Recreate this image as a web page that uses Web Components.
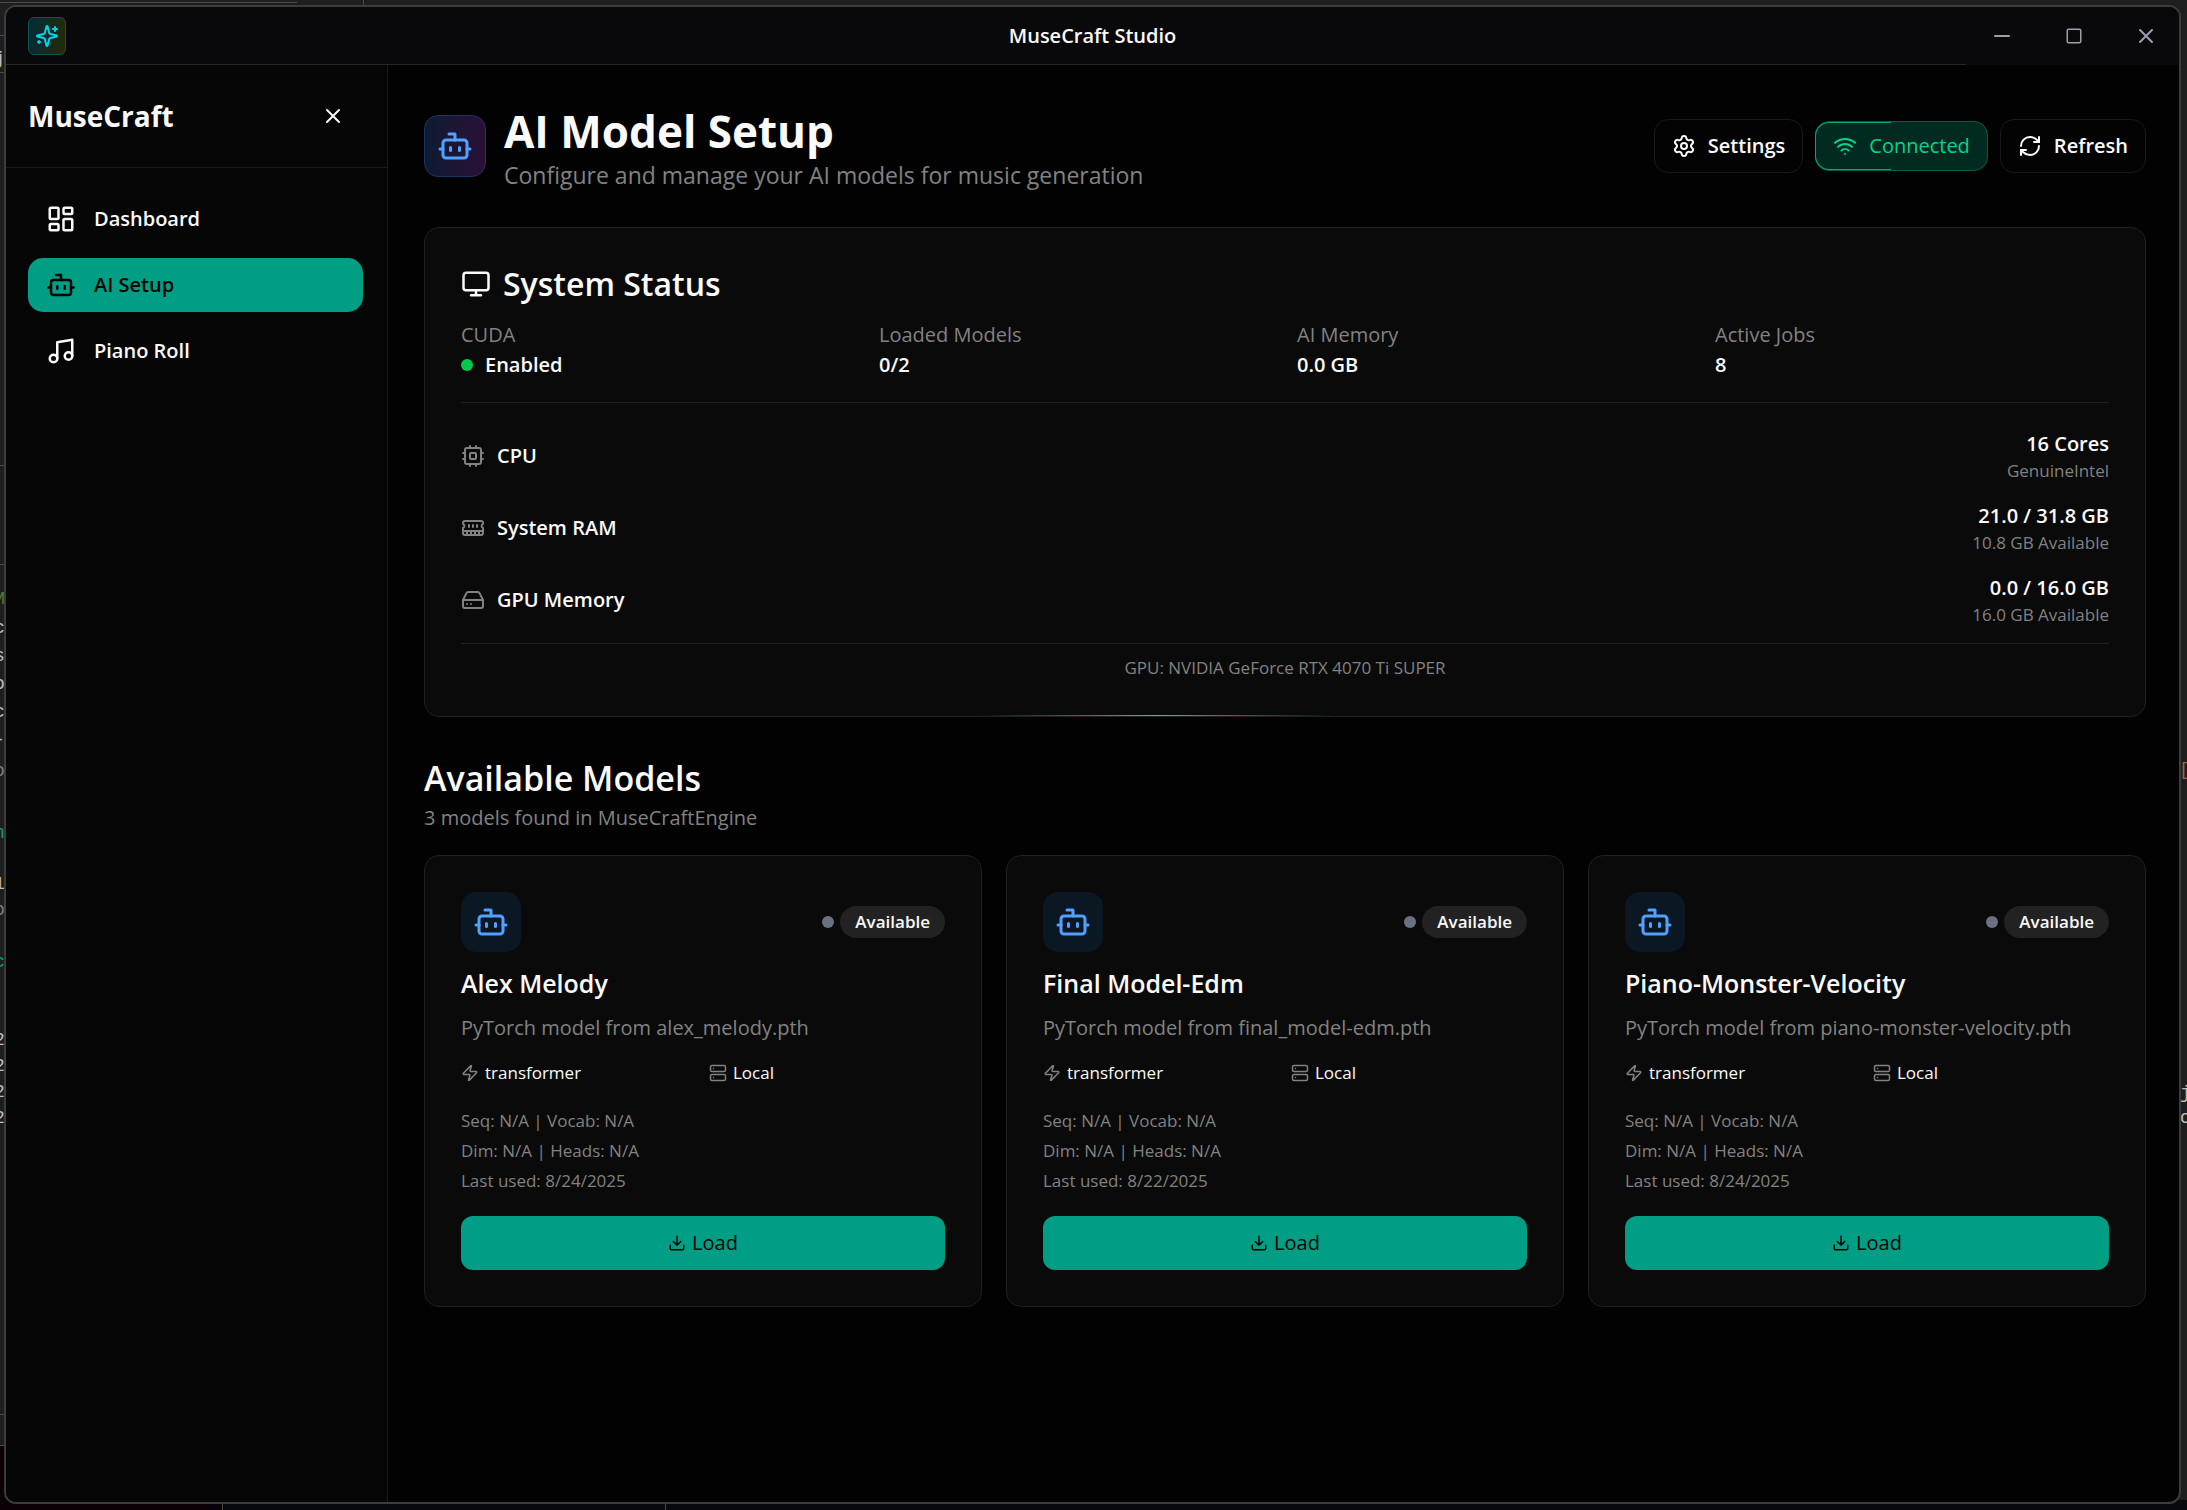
<!DOCTYPE html>
<html lang="en">
<head>
<meta charset="utf-8">
<title>MuseCraft Studio</title>
<style>
    html, body { height: 100%; }
    body {
        margin: 0;
        background: #1c1c1c;
        color: #fafafa;
        font-family: "Open Sans", "Noto Sans", sans-serif;
        font-size: 20px;
        line-height: 30px;
    }
</style>
</head>
<body>
<app-window></app-window>

<script>
const ICONS = {
    sparkles: '<path d="M9.937 15.5A2 2 0 0 0 8.5 14.063l-6.135-1.582a.5.5 0 0 1 0-.962L8.5 9.936A2 2 0 0 0 9.937 8.5l1.582-6.135a.5.5 0 0 1 .963 0L14.063 8.5A2 2 0 0 0 15.5 9.937l6.135 1.581a.5.5 0 0 1 0 .964L15.5 14.063a2 2 0 0 0-1.437 1.437l-1.582 6.135a.5.5 0 0 1-.963 0z"/><path d="M20 3v4M22 5h-4M4 17v2M5 18H3"/>',
    minus: '<path d="M5 12h14"/>',
    square: '<rect x="3" y="3" width="18" height="18" rx="2"/>',
    x: '<path d="M18 6 6 18M6 6l12 12"/>',
    dashboard: '<rect x="3" y="3" width="7" height="9" rx="1"/><rect x="14" y="3" width="7" height="5" rx="1"/><rect x="14" y="12" width="7" height="9" rx="1"/><rect x="3" y="16" width="7" height="5" rx="1"/>',
    bot: '<path d="M12 8V4H8"/><rect x="4" y="8" width="16" height="12" rx="2"/><path d="M2 14h2M20 14h2M15 13v2M9 13v2"/>',
    music: '<path d="M9 18V5l12-2v13"/><circle cx="6" cy="18" r="3"/><circle cx="18" cy="16" r="3"/>',
    settings: '<path d="M9.671 4.136a2.34 2.34 0 0 1 4.659 0 2.34 2.34 0 0 0 3.319 1.915 2.34 2.34 0 0 1 2.33 4.033 2.34 2.34 0 0 0 0 3.831 2.34 2.34 0 0 1-2.33 4.033 2.34 2.34 0 0 0-3.319 1.915 2.34 2.34 0 0 1-4.659 0 2.34 2.34 0 0 0-3.32-1.915 2.34 2.34 0 0 1-2.33-4.033 2.34 2.34 0 0 0 0-3.831A2.34 2.34 0 0 1 6.35 6.051a2.34 2.34 0 0 0 3.319-1.915"/><circle cx="12" cy="12" r="3"/>',
    wifi: '<path d="M12 20h.01M2 8.82a15 15 0 0 1 20 0M5 12.859a10 10 0 0 1 14 0M8.5 16.429a5 5 0 0 1 7 0"/>',
    refresh: '<path d="M3 12a9 9 0 0 1 9-9 9.75 9.75 0 0 1 6.74 2.74L21 8"/><path d="M21 3v5h-5"/><path d="M21 12a9 9 0 0 1-9 9 9.75 9.75 0 0 1-6.74-2.74L3 16"/><path d="M8 16H3v5"/>',
    monitor: '<rect x="2" y="3" width="20" height="14" rx="2"/><path d="M8 21h8M12 17v4"/>',
    cpu: '<rect x="4" y="4" width="16" height="16" rx="2"/><rect x="9" y="9" width="6" height="6" rx="1"/><path d="M15 2v2M15 20v2M2 15h2M2 9h2M20 15h2M20 9h2M9 2v2M9 20v2"/>',
    memory: '<path d="M6 19v-3M10 19v-3M14 19v-3M18 19v-3M8 11V9M16 11V9M12 11V9M2 15h20M2 7a2 2 0 0 1 2-2h16a2 2 0 0 1 2 2v1.1a2 2 0 0 0 0 3.837V17a2 2 0 0 1-2 2H4a2 2 0 0 1-2-2v-5.1a2 2 0 0 0 0-3.837Z"/>',
    drive: '<path d="M22 12H2"/><path d="M5.45 5.11 2 12v6a2 2 0 0 0 2 2h16a2 2 0 0 0 2-2v-6l-3.45-6.89A2 2 0 0 0 16.76 4H7.24a2 2 0 0 0-1.79 1.11z"/><path d="M6 16h.01M10 16h.01"/>',
    zap: '<path d="M4 14a1 1 0 0 1-.78-1.63l9.9-10.2a.5.5 0 0 1 .86.46l-1.92 6.02A1 1 0 0 0 13 10h7a1 1 0 0 1 .78 1.63l-9.9 10.2a.5.5 0 0 1-.86-.46l1.92-6.02A1 1 0 0 0 11 14z"/>',
    server: '<rect x="2" y="2" width="20" height="8" rx="2"/><rect x="2" y="14" width="20" height="8" rx="2"/><path d="M6 6h.01M6 18h.01"/>',
    download: '<path d="M21 15v4a2 2 0 0 1-2 2H5a2 2 0 0 1-2-2v-4"/><path d="m7 10 5 5 5-5M12 15V3"/>'
};

class UiIcon extends HTMLElement {
    constructor() {
        super();
        this.attachShadow({ mode: 'open' });
    }

    connectedCallback() {
        this.shadowRoot.innerHTML = `
            <style>
                :host { display: block; flex: none; width: var(--size, 24px); height: var(--size, 24px); }
                svg { display: block; width: 100%; height: 100%; }
            </style>
            <svg viewBox="0 0 24 24" fill="none" stroke="currentColor" stroke-width="2" stroke-linecap="round" stroke-linejoin="round" aria-hidden="true">${ICONS[this.getAttribute('name')]}</svg>
        `;
    }
}

// What shows of the desktop around the window
class DesktopBackdrop extends HTMLElement {
    constructor() {
        super();
        this.attachShadow({ mode: 'open' });
        this.shadowRoot.innerHTML = `
            <style>
                :host { display: block; position: absolute; inset: 0; overflow: hidden; z-index: -1; }
                svg { display: block; width: 100%; height: 100%; }
                text { font: 18px "Liberation Mono", monospace; fill: #c0c0c0; }
                .dim { fill: #808080; }
                .green { fill: #12a066; }
                .olive { fill: #5d7b2c; }
                .rust { fill: #a0623c; }
            </style>
            <svg aria-hidden="true">
                <rect width="100%" height="100%" fill="#1e1e1e"/>
                <rect y="1446" width="222" height="64" fill="#0a0008"/>
                <rect x="222" y="1500" width="100%" height="10" fill="#08080f"/>
                <path d="M0 2.500H297M363.500 0V6M0 35.500H6M0 72.500H6M0 465.500H6M0 564.500H6M0 1414.500H6M0 1445.500H6M222.500 1500V1510M665.500 1500V1510" stroke="#4a4a4a" fill="none"/>
                <text x="-6" y="64">j</text>
                <text x="-6" y="604" class="olive">M</text>
                <text x="-6" y="633">c</text>
                <text x="-6" y="661">s</text>
                <text x="-6" y="689">o</text>
                <text x="-6" y="717">c</text>
                <text x="-6" y="745">-</text>
                <text x="-6" y="776" class="dim">o</text>
                <text x="-6" y="838" class="green">n</text>
                <text x="-6" y="889">1</text>
                <text x="-6" y="915" class="dim">o</text>
                <text x="-6" y="967" class="green">c</text>
                <text x="-6" y="1045">2</text>
                <text x="-6" y="1071">2</text>
                <text x="-6" y="1097">2</text>
                <text x="-6" y="1123">2</text>
                <svg x="100%" overflow="visible">
                    <text x="-8" y="775" class="rust">[</text>
                    <text x="-7" y="1098">j</text>
                    <text x="-7" y="1123">o</text>
                </svg>
            </svg>
        `;
    }
}

class TitleBar extends HTMLElement {
    constructor() {
        super();
        this.attachShadow({ mode: 'open' });
        this.shadowRoot.innerHTML = `
            <style>
                :host {
                    display: grid;
                    grid-template-columns: 1fr auto 1fr;
                    height: 58px;
                    background: linear-gradient(#262626, #262626) bottom / 100% 1px no-repeat #09090b;
                }
                .logo {
                    display: grid;
                    place-items: center;
                    align-self: center;
                    width: 36px;
                    height: 36px;
                    margin-left: 22px;
                    border: 1px solid #0d5157;
                    border-radius: 6px;
                    background: linear-gradient(90deg, #052b36, #222b08);
                    color: #00d3f2;
                }
                .title { align-self: center; font-weight: 600; }
                .controls { display: flex; justify-self: end; margin-right: -3px; background: #09090b; }
                button {
                    display: grid;
                    place-items: center;
                    width: 72px;
                    padding: 0;
                    border: 0;
                    background: none;
                    color: #99a1af;
                }
                .max { --size: 18px; }
            </style>
            <div class="logo"><ui-icon name="sparkles"></ui-icon></div>
            <div class="title"><slot></slot></div>
            <div class="controls">
                <button aria-label="Minimize"><ui-icon name="minus"></ui-icon></button>
                <button class="max" aria-label="Maximize"><ui-icon name="square"></ui-icon></button>
                <button aria-label="Close"><ui-icon name="x"></ui-icon></button>
            </div>
        `;
    }
}

class NavItem extends HTMLElement {
    constructor() {
        super();
        this.attachShadow({ mode: 'open' });
    }

    connectedCallback() {
        this.shadowRoot.innerHTML = `
            <style>
                :host { display: block; }
                a {
                    display: flex;
                    align-items: center;
                    gap: 18px;
                    height: 54px;
                    padding: 0 18px;
                    border-radius: 15px;
                    color: #fafafa;
                    font-weight: 600;
                    text-decoration: none;
                    --size: 30px;
                }
                :host([active]) a { background: #009e84; color: #030303; }
            </style>
            <a href="${this.getAttribute('href')}"><ui-icon name="${this.getAttribute('icon')}"></ui-icon><slot></slot></a>
        `;
    }
}

class SideBar extends HTMLElement {
    constructor() {
        super();
        this.attachShadow({ mode: 'open' });
        this.shadowRoot.innerHTML = `
            <style>
                :host { display: block; flex: none; width: 381px; border-right: 1px solid #1a1a1a; background: #060606; }
                header {
                    display: flex;
                    align-items: center;
                    justify-content: space-between;
                    height: 102px;
                    padding: 0 36px 0 22px;
                    border-bottom: 1px solid #1a1a1a;
                }
                h2 { margin: 0; font-size: 28px; line-height: 42px; font-weight: 700; }
                button {
                    display: grid;
                    place-items: center;
                    width: 36px;
                    height: 36px;
                    padding: 0;
                    border: 0;
                    background: none;
                    color: inherit;
                }
                nav { display: flex; flex-direction: column; gap: 12px; padding: 24px 24px 24px 22px; }
            </style>
            <header>
                <h2>MuseCraft</h2>
                <button aria-label="Close sidebar"><ui-icon name="x"></ui-icon></button>
            </header>
            <nav>
                <nav-item icon="dashboard" href="#dashboard">Dashboard</nav-item>
                <nav-item icon="bot" href="#ai-setup" active>AI Setup</nav-item>
                <nav-item icon="music" href="#piano-roll">Piano Roll</nav-item>
            </nav>
        `;
    }
}

class PageHeader extends HTMLElement {
    constructor() {
        super();
        this.attachShadow({ mode: 'open' });
        this.shadowRoot.innerHTML = `
            <style>
                :host { display: flex; align-items: center; gap: 18px; }
                .badge {
                    display: grid;
                    place-items: center;
                    width: 60px;
                    height: 60px;
                    border: 1px solid #1b3563;
                    border-radius: 14px;
                    background: linear-gradient(90deg, #0e1b33, #2a1036);
                    color: #51a2ff;
                    --size: 36px;
                }
                .text { flex: 1; padding-bottom: 2px; }
                h1 { margin: 0; font-size: 44px; line-height: 60px; font-weight: 700; }
                p { margin: 0; font-size: 23px; line-height: 28px; color: #828282; }
                .actions { display: flex; align-items: center; gap: 12px; }
                .action, .status {
                    display: flex;
                    align-items: center;
                    gap: 12px;
                    box-sizing: border-box;
                    height: 54px;
                    padding: 0 17px;
                    border: 1px solid #1a1a1a;
                    border-radius: 14px;
                    background: #030303;
                    color: #fafafa;
                    font: inherit;
                    font-weight: 600;
                }
                .status {
                    position: relative;
                    height: 50px;
                    border-color: #006045;
                    background: #012a20;
                    color: #00d492;
                    font-weight: 500;
                }
                /* the trace that runs round the connection badge */
                .status::before {
                    content: "";
                    position: absolute;
                    inset: 0 56% 0 -1px;
                    border: 1px solid #00a878;
                    border-right: 0;
                    border-radius: 14px 0 0 14px;
                }
            </style>
            <div class="badge"><ui-icon name="bot"></ui-icon></div>
            <div class="text">
                <h1>AI Model Setup</h1>
                <p>Configure and manage your AI models for music generation</p>
            </div>
            <div class="actions">
                <button class="action"><ui-icon name="settings"></ui-icon>Settings</button>
                <div class="status" role="status"><ui-icon name="wifi"></ui-icon>Connected</div>
                <button class="action"><ui-icon name="refresh"></ui-icon>Refresh</button>
            </div>
        `;
    }
}

class ResourceRow extends HTMLElement {
    constructor() {
        super();
        this.attachShadow({ mode: 'open' });
    }

    connectedCallback() {
        this.shadowRoot.innerHTML = `
            <style>
                :host { display: flex; align-items: center; gap: 12px; }
                ui-icon { color: #828282; }
                .name { flex: 1; font-weight: 600; }
                .usage { text-align: right; }
                .value { font-weight: 600; }
                .note { font-size: 17px; line-height: 24px; color: #828282; }
            </style>
            <ui-icon name="${this.getAttribute('icon')}"></ui-icon>
            <div class="name"><slot></slot></div>
            <div class="usage">
                <div class="value">${this.getAttribute('value')}</div>
                <div class="note">${this.getAttribute('note')}</div>
            </div>
        `;
    }
}

class SystemStatus extends HTMLElement {
    constructor() {
        super();
        this.attachShadow({ mode: 'open' });
        this.shadowRoot.innerHTML = `
            <style>
                :host {
                    display: block;
                    position: relative;
                    padding: 36px;
                    border: 1px solid #202020;
                    border-radius: 15px;
                    background: #0a0a0a;
                }
                /* glow on the lower edge */
                :host::after {
                    content: "";
                    position: absolute;
                    left: 32%;
                    bottom: 0;
                    width: 21%;
                    height: 1px;
                    background: linear-gradient(90deg, transparent, #12d896, transparent);
                }
                h2 {
                    display: flex;
                    align-items: center;
                    gap: 12px;
                    margin: 0 0 16px;
                    font-size: 32px;
                    line-height: 40px;
                    font-weight: 600;
                    --size: 30px;
                }
                dl {
                    display: grid;
                    grid-template-columns: repeat(4, 1fr);
                    gap: 24px;
                    margin: 0;
                    padding-bottom: 22px;
                }
                dt { color: #828282; }
                dd { display: flex; align-items: center; gap: 12px; margin: 0; font-weight: 600; }
                .dot { width: 12px; height: 12px; border-radius: 50%; background: #00c950; }
                .rows {
                    display: flex;
                    flex-direction: column;
                    gap: 18px;
                    padding: 26px 0 16px;
                    border: solid #202020;
                    border-width: 1px 0;
                }
                .gpu {
                    margin: 0;
                    padding-top: 12px;
                    font-size: 17px;
                    line-height: 24px;
                    text-align: center;
                    color: #828282;
                }
            </style>
            <h2><ui-icon name="monitor"></ui-icon>System Status</h2>
            <dl>
                <div><dt>CUDA</dt><dd><span class="dot"></span>Enabled</dd></div>
                <div><dt>Loaded Models</dt><dd>0/2</dd></div>
                <div><dt>AI Memory</dt><dd>0.0 GB</dd></div>
                <div><dt>Active Jobs</dt><dd>8</dd></div>
            </dl>
            <div class="rows">
                <resource-row icon="cpu" value="16 Cores" note="GenuineIntel">CPU</resource-row>
                <resource-row icon="memory" value="21.0 / 31.8 GB" note="10.8 GB Available">System RAM</resource-row>
                <resource-row icon="drive" value="0.0 / 16.0 GB" note="16.0 GB Available">GPU Memory</resource-row>
            </div>
            <p class="gpu">GPU: NVIDIA GeForce RTX 4070 Ti SUPER</p>
        `;
    }
}

class ModelCard extends HTMLElement {
    constructor() {
        super();
        this.attachShadow({ mode: 'open' });
    }

    connectedCallback() {
        this.shadowRoot.innerHTML = `
            <style>
                :host {
                    display: block;
                    padding: 36px;
                    border: 1px solid #202020;
                    border-radius: 15px;
                    background: #0a0a0a;
                }
                .top { display: flex; align-items: center; gap: 6px; }
                .avatar {
                    display: grid;
                    place-items: center;
                    width: 60px;
                    height: 60px;
                    margin-right: auto;
                    border-radius: 15px;
                    background: #0c1724;
                    color: #51a2ff;
                    --size: 36px;
                }
                .dot { width: 12px; height: 12px; border-radius: 50%; background: #6a7282; }
                .pill {
                    padding: 0 15px;
                    border-radius: 16px;
                    background: #222222;
                    font-size: 17px;
                    line-height: 32px;
                    font-weight: 600;
                }
                h3 { margin: 13px 0 12px; font-size: 25px; line-height: 36px; font-weight: 600; }
                p { margin: 0; color: #828282; }
                .meta {
                    display: grid;
                    grid-template-columns: 1fr 1fr;
                    gap: 12px;
                    margin: 18px 0 21px;
                    font-size: 17px;
                    line-height: 24px;
                    --size: 18px;
                }
                .meta div { display: flex; align-items: center; gap: 6px; }
                .meta ui-icon { color: #828282; }
                .specs { margin-bottom: 20px; font-size: 17px; color: #828282; }
                button {
                    display: flex;
                    align-items: center;
                    justify-content: center;
                    gap: 6px;
                    width: 100%;
                    height: 54px;
                    padding: 0;
                    border: 0;
                    border-radius: 12px;
                    background: #009e84;
                    color: #030303;
                    font: inherit;
                    font-weight: 500;
                    --size: 18px;
                }
            </style>
            <div class="top">
                <div class="avatar"><ui-icon name="bot"></ui-icon></div>
                <span class="dot"></span>
                <span class="pill">Available</span>
            </div>
            <h3><slot></slot></h3>
            <p>PyTorch model from ${this.getAttribute('file')}</p>
            <div class="meta">
                <div><ui-icon name="zap"></ui-icon>transformer</div>
                <div><ui-icon name="server"></ui-icon>Local</div>
            </div>
            <div class="specs">
                <div>Seq: N/A | Vocab: N/A</div>
                <div>Dim: N/A | Heads: N/A</div>
                <div>Last used: ${this.getAttribute('used')}</div>
            </div>
            <button><ui-icon name="download"></ui-icon>Load</button>
        `;
    }
}

class ModelList extends HTMLElement {
    constructor() {
        super();
        this.attachShadow({ mode: 'open' });
        this.shadowRoot.innerHTML = `
            <style>
                :host { display: block; }
                h2 { margin: 0; font-size: 34px; line-height: 50px; font-weight: 600; }
                p { margin: 0 0 22px; color: #828282; }
                .grid { display: grid; grid-template-columns: repeat(3, 1fr); gap: 24px; }
            </style>
            <h2>Available Models</h2>
            <p>3 models found in MuseCraftEngine</p>
            <div class="grid">
                <model-card file="alex_melody.pth" used="8/24/2025">Alex Melody</model-card>
                <model-card file="final_model-edm.pth" used="8/22/2025">Final Model-Edm</model-card>
                <model-card file="piano-monster-velocity.pth" used="8/24/2025">Piano-Monster-Velocity</model-card>
            </div>
        `;
    }
}

class AppWindow extends HTMLElement {
    constructor() {
        super();
        this.attachShadow({ mode: 'open' });
        this.shadowRoot.innerHTML = `
            <style>
                :host {
                    display: flex;
                    box-sizing: border-box;
                    min-height: 100vh;
                    padding: 5px 6px 6px 4px;
                    position: relative;
                    z-index: 0;
                }
                .window {
                    display: flex;
                    flex-direction: column;
                    flex: 1;
                    min-width: 0;
                    border: 2px solid #3c3c3c;
                    border-radius: 12px;
                    background: #020202;
                    overflow: hidden;
                }
                .body { display: flex; flex: 1; }
                main {
                    display: flex;
                    flex-direction: column;
                    gap: 36px;
                    flex: 1;
                    min-width: 0;
                    padding: 36px 33px 36px 36px;
                }
            </style>
            <desktop-backdrop></desktop-backdrop>
            <div class="window">
                <title-bar>MuseCraft Studio</title-bar>
                <div class="body">
                    <side-bar></side-bar>
                    <main>
                        <page-header></page-header>
                        <system-status></system-status>
                        <model-list></model-list>
                    </main>
                </div>
            </div>
        `;
    }
}

customElements.define('ui-icon', UiIcon);
customElements.define('desktop-backdrop', DesktopBackdrop);
customElements.define('title-bar', TitleBar);
customElements.define('nav-item', NavItem);
customElements.define('side-bar', SideBar);
customElements.define('page-header', PageHeader);
customElements.define('resource-row', ResourceRow);
customElements.define('system-status', SystemStatus);
customElements.define('model-card', ModelCard);
customElements.define('model-list', ModelList);
customElements.define('app-window', AppWindow);
</script>
</body>
</html>
